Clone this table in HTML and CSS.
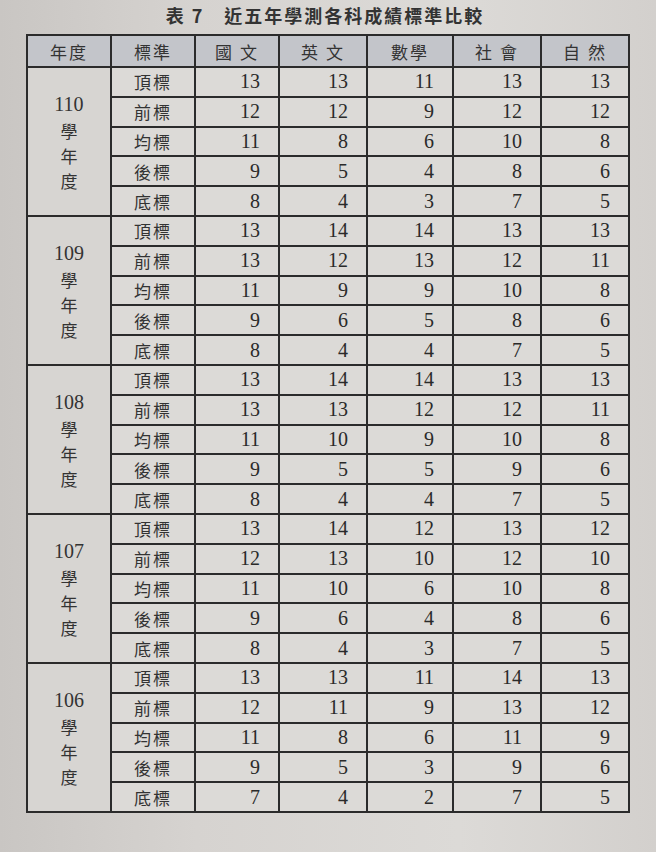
FILE: index.html
```html
<!DOCTYPE html>
<html lang="zh-Hant">
<head>
<meta charset="utf-8">
<link rel="stylesheet" href="styles.css">
</head>
<body>
<div class="page">
  <h1 class="title">表 7　近五年學測各科成績標準比較</h1>
  <table class="grid">
    <colgroup>
      <col class="c-year"><col class="c-std"><col class="c-a"><col class="c-b"><col class="c-c"><col class="c-d"><col class="c-e">
    </colgroup>
    <thead>
      <tr><th>年度</th><th>標準</th><th>國 文</th><th>英 文</th><th>數學</th><th>社 會</th><th>自 然</th></tr>
    </thead>
    <tbody>
      <tr><td class="year" rowspan="5"><span class="yr">110</span><span>學</span><span>年</span><span>度</span></td><td class="std">頂標</td><td>13</td><td>13</td><td>11</td><td>13</td><td>13</td></tr>
      <tr><td class="std">前標</td><td>12</td><td>12</td><td>9</td><td>12</td><td>12</td></tr>
      <tr><td class="std">均標</td><td>11</td><td>8</td><td>6</td><td>10</td><td>8</td></tr>
      <tr><td class="std">後標</td><td>9</td><td>5</td><td>4</td><td>8</td><td>6</td></tr>
      <tr><td class="std">底標</td><td>8</td><td>4</td><td>3</td><td>7</td><td>5</td></tr>

      <tr><td class="year" rowspan="5"><span class="yr">109</span><span>學</span><span>年</span><span>度</span></td><td class="std">頂標</td><td>13</td><td>14</td><td>14</td><td>13</td><td>13</td></tr>
      <tr><td class="std">前標</td><td>13</td><td>12</td><td>13</td><td>12</td><td>11</td></tr>
      <tr><td class="std">均標</td><td>11</td><td>9</td><td>9</td><td>10</td><td>8</td></tr>
      <tr><td class="std">後標</td><td>9</td><td>6</td><td>5</td><td>8</td><td>6</td></tr>
      <tr><td class="std">底標</td><td>8</td><td>4</td><td>4</td><td>7</td><td>5</td></tr>

      <tr><td class="year" rowspan="5"><span class="yr">108</span><span>學</span><span>年</span><span>度</span></td><td class="std">頂標</td><td>13</td><td>14</td><td>14</td><td>13</td><td>13</td></tr>
      <tr><td class="std">前標</td><td>13</td><td>13</td><td>12</td><td>12</td><td>11</td></tr>
      <tr><td class="std">均標</td><td>11</td><td>10</td><td>9</td><td>10</td><td>8</td></tr>
      <tr><td class="std">後標</td><td>9</td><td>5</td><td>5</td><td>9</td><td>6</td></tr>
      <tr><td class="std">底標</td><td>8</td><td>4</td><td>4</td><td>7</td><td>5</td></tr>

      <tr><td class="year" rowspan="5"><span class="yr">107</span><span>學</span><span>年</span><span>度</span></td><td class="std">頂標</td><td>13</td><td>14</td><td>12</td><td>13</td><td>12</td></tr>
      <tr><td class="std">前標</td><td>12</td><td>13</td><td>10</td><td>12</td><td>10</td></tr>
      <tr><td class="std">均標</td><td>11</td><td>10</td><td>6</td><td>10</td><td>8</td></tr>
      <tr><td class="std">後標</td><td>9</td><td>6</td><td>4</td><td>8</td><td>6</td></tr>
      <tr><td class="std">底標</td><td>8</td><td>4</td><td>3</td><td>7</td><td>5</td></tr>

      <tr><td class="year" rowspan="5"><span class="yr">106</span><span>學</span><span>年</span><span>度</span></td><td class="std">頂標</td><td>13</td><td>13</td><td>11</td><td>14</td><td>13</td></tr>
      <tr><td class="std">前標</td><td>12</td><td>11</td><td>9</td><td>13</td><td>12</td></tr>
      <tr><td class="std">均標</td><td>11</td><td>8</td><td>6</td><td>11</td><td>9</td></tr>
      <tr><td class="std">後標</td><td>9</td><td>5</td><td>3</td><td>9</td><td>6</td></tr>
      <tr><td class="std">底標</td><td>7</td><td>4</td><td>2</td><td>7</td><td>5</td></tr>
    </tbody>
  </table>
</div>
</body>
</html>
```
FILE: styles.css
```css
html, body {
  margin: 0;
  padding: 0;
}
body {
  width: 656px;
  height: 852px;
  overflow: hidden;
  background: linear-gradient(90deg, #c9c6c3 0%, #d6d3d0 30%, #dcdad7 70%, #d3d0cd 100%);
  font-family: "Liberation Serif", "Noto Sans CJK TC", serif;
  color: #2a2a2a;
}
.page {
  padding: 2px 28px 0 26px;
}
.title {
  margin: 0 0 6px 0;
  height: 26px;
  line-height: 26px;
  text-align: center;
  font-family: "Noto Sans CJK TC", sans-serif;
  font-size: 18px;
  font-weight: 700;
  color: #333;
  letter-spacing: 2px;
  padding-right: 4px;
}
.grid {
  border-collapse: collapse;
  width: 602px;
  table-layout: fixed;
  border: 2px solid #2b2b2b;
}
.c-year { width: 84px; }
.c-std { width: 84px; }
.c-a { width: 84px; }
.c-b { width: 88px; }
.c-c { width: 86px; }
.c-d { width: 88px; }
.c-e { width: 88px; }
.grid th, .grid td {
  border: 2px solid #2b2b2b;
  padding: 0;
}
.grid th {
  height: 30px;
  background: #c3c5ca;
  font-family: "Noto Sans CJK TC", sans-serif;
  font-weight: 400;
  font-size: 17px;
  letter-spacing: 2px;
  color: #333;
  text-align: center;
}
.grid td {
  height: 27.8px;
  background: #dcdad7;
  font-size: 20px;
  text-align: right;
  padding-right: 18px;
  color: #2a2a2a;
}
.grid td.std {
  text-align: center;
  padding-right: 0;
  font-family: "Noto Sans CJK TC", sans-serif;
  font-size: 17px;
  letter-spacing: 2px;
  color: #333;
}
.grid td.year {
  text-align: center;
  padding: 0;
  background: #d7d5d2;
}
.year span {
  display: block;
  font-family: "Noto Sans CJK TC", sans-serif;
  font-size: 17px;
  line-height: 25px;
  color: #333;
}
.year span.yr {
  font-family: "Liberation Serif", serif;
  font-size: 20px;
  line-height: 28px;
}
```
